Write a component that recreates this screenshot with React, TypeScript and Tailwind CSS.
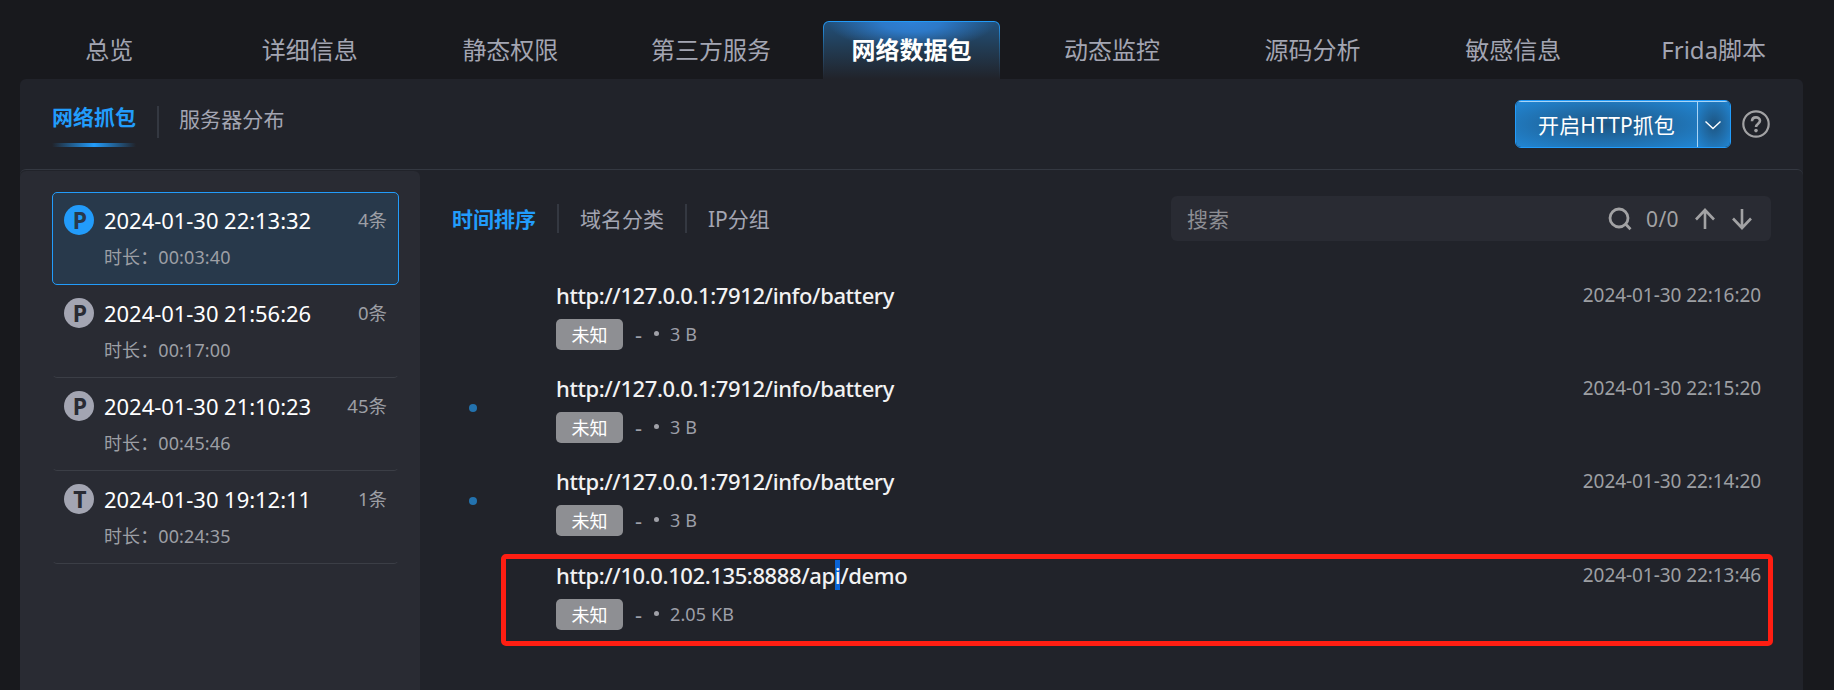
import type { ReactNode } from "react";

const tabs = ["总览", "详细信息", "静态权限", "第三方服务", "网络数据包", "动态监控", "源码分析", "敏感信息", "Frida脚本"];

const sessions = [
  { kind: "P", time: "2024-01-30 22:13:32", count: "4条", duration: "00:03:40", active: true },
  { kind: "P", time: "2024-01-30 21:56:26", count: "0条", duration: "00:17:00", active: false },
  { kind: "P", time: "2024-01-30 21:10:23", count: "45条", duration: "00:45:46", active: false },
  { kind: "T", time: "2024-01-30 19:12:11", count: "1条", duration: "00:24:35", active: false },
];

type Packet = { url: ReactNode; size: string; time: string; dot: boolean };

const packets: Packet[] = [
  { url: "http://127.0.0.1:7912/info/battery", size: "3 B", time: "2024-01-30 22:16:20", dot: false },
  { url: "http://127.0.0.1:7912/info/battery", size: "3 B", time: "2024-01-30 22:15:20", dot: true },
  { url: "http://127.0.0.1:7912/info/battery", size: "3 B", time: "2024-01-30 22:14:20", dot: true },
];

function Tab({ label }: { label: string }) {
  const active = label === "网络数据包";
  return (
    <div className="flex justify-center">
      {active ? (
        <div className="mt-px h-[58px] w-[177px] rounded-t-md bg-linear-to-b from-[#229cfb] via-[#22608f] via-40% to-[#21232a] px-px pt-px">
          <div className="h-[57px] rounded-t-[5px] bg-[radial-gradient(84px_28px_at_50%_0,#2e80d6_0%,#2d79c8_35%,rgba(45,121,200,0)_100%),linear-gradient(180deg,#22507a_0%,#223c54_45%,#21232a_100%)] pt-[11px] text-center text-2xl leading-[34px] font-bold text-white">
            {label}
          </div>
        </div>
      ) : (
        <div className="pt-[13px] text-2xl leading-[34px] text-[#a3a5b2]">{label}</div>
      )}
    </div>
  );
}

function SessionItem({ item }: { item: (typeof sessions)[number] }) {
  return (
    <div
      className={
        item.active
          ? "flex h-[93px] rounded-[5px] border border-[#229cfb] bg-[#28394b] pt-[10px] pr-[11px] pl-[11px]"
          : "flex h-[93px] rounded-[5px] border border-transparent border-b-[#3b3e46] pt-[10px] pr-[11px] pl-[11px]"
      }
    >
      <div
        className={
          item.active
            ? "mt-[2px] flex size-[30px] shrink-0 items-center justify-center rounded-full bg-[#229cfb] pt-px pl-0.5 text-[23px] leading-none font-bold text-[#28394b]"
            : "mt-[2px] flex size-[30px] shrink-0 items-center justify-center rounded-full bg-[#a3a5b2] pt-px pl-0.5 text-[23px] leading-none font-bold text-[#292b33]"
        }
      >
        {item.kind}
      </div>
      <div className="ml-[10px] flex-1">
        <div className="flex items-center justify-between">
          <span className="text-[22px] leading-[34px] tracking-[-0.04px] text-white">{item.time}</span>
          <span className="text-[18.500px] leading-[34px] text-[#9d9fa5]">{item.count}</span>
        </div>
        <div className="mt-[6px] text-[18px] leading-[28px] tracking-[0.1px] text-[#9d9fa5]">时长：{item.duration}</div>
      </div>
    </div>
  );
}

function PacketRow({ item }: { item: Packet }) {
  return (
    <div className="flex h-[93px] items-start">
      <div className="flex w-[104px] shrink-0 pt-[48px] pl-[17px]">
        {item.dot && <span className="size-2 rounded-full bg-[#2372ae]" />}
      </div>
      <div className="flex-1 pt-[16px]">
        <div className="text-[22px] leading-[33px] font-medium tracking-[-0.4px] text-[#f2f2f3]">{item.url}</div>
        <div className="mt-[7px] flex items-center text-[18px] leading-[31px] text-[#9d9fa8]">
          <span className="h-[31px] w-[67px] rounded-[5px] bg-[#8e8f93] text-center leading-[33px] text-white">未知</span>
          <span className="ml-3 w-2 text-[22px]">-</span>
          <span className="mt-[-2px] ml-[11px] size-[5px] rounded-full bg-[#a0a1a8]" />
          <span className="ml-[11px] tracking-[0.1px]">{item.size}</span>
        </div>
      </div>
      <div className="pt-[18px] pr-[10px] text-[19px] leading-[28px] tracking-[-0.07px] text-[#9d9fa3]">{item.time}</div>
    </div>
  );
}

function Divider({ className }: { className: string }) {
  return <span className={`w-0.5 bg-[#343841] ${className}`} />;
}

export default function App() {
  return (
    <div className="h-[690px] w-[1834px] overflow-hidden bg-[#18191d] font-['Noto_Sans','Noto_Sans_CJK_SC',sans-serif] whitespace-nowrap">
      <nav className="ml-[9px] grid h-[79px] w-[1805px] grid-cols-9 pt-5">
        {tabs.map((label) => (
          <Tab key={label} label={label} />
        ))}
      </nav>

      <main className="ml-5 flex h-[611px] w-[1783px] flex-col rounded-t-md bg-[#21232a]">
        <header className="flex h-[90px] shrink-0 items-start pl-8">
          <div className="flex w-[84px] flex-col pt-[22px]">
            <span className="text-[21px] leading-[32px] font-bold text-[#229cfb]">网络抓包</span>
            <span className="mt-[10px] h-1 bg-linear-to-r from-transparent via-[#229cfb] to-transparent" />
          </div>
          <Divider className="mt-[27px] ml-[21px] h-8" />
          <span className="mt-[24px] ml-[20px] text-[21px] leading-[32px] tracking-[0.1px] text-[#a3a5b2]">服务器分布</span>

          <div className="mt-[21px] mr-[33px] ml-auto flex items-center">
            <div className="flex h-12 w-[216px] overflow-hidden rounded-md border border-[#229cfb]">
              <div className="flex w-[182px] items-center justify-center border-t border-r border-[#a9d4f5] bg-[radial-gradient(ellipse_at_center,#1d5582_0%,#206ba6_45%,#2186d4_100%)] pt-0.5 text-[21px] leading-none tracking-[0.1px] text-white">
                开启HTTP抓包
              </div>
              <div className="flex flex-1 items-center justify-center border-t border-[#a9d4f5] bg-[radial-gradient(ellipse_at_center,#1d5582_0%,#206ba6_45%,#2186d4_100%)] pr-0.5">
                <svg width="18" height="12" viewBox="0 0 18 12" fill="none" stroke="#fff" strokeWidth="1.4">
                  <path d="M1.5 2.5 9 9.5l7.500-7" />
                </svg>
              </div>
            </div>
            <svg className="ml-[11px]" width="28" height="28" viewBox="0 0 28 28" fill="none" stroke="#a2a2a4" strokeWidth="2.200">
              <circle cx="14" cy="14" r="12.700" />
              <path d="M10 11.200c0-5 8-5 8-.4 0 2.800-4 3-4 6.200" strokeWidth="2.600" />
              <circle cx="14" cy="20.600" r="1.800" fill="#a2a2a4" stroke="none" />
            </svg>
          </div>
        </header>

        <div className="flex min-h-0 flex-1 rounded-t-md border-t border-[#343841]">
          <aside className="mt-px w-[400px] shrink-0 rounded-t-md bg-[#292b33] pt-[21px] pr-[21px] pl-8">
            {sessions.map((item) => (
              <SessionItem key={item.time} item={item} />
            ))}
          </aside>

          <section className="flex-1 pt-[26px] pr-8 pl-8">
            <div className="flex h-[45px] items-center text-[21px] leading-[32px] text-[#a3a5b2]">
              <span className="font-bold text-[#229cfb]">时间排序</span>
              <Divider className="ml-[21px] h-[29px]" />
              <span className="ml-[21px]">域名分类</span>
              <Divider className="ml-[21px] h-[29px]" />
              <span className="ml-[21px]">IP分组</span>

              <div className="ml-auto flex h-[45px] w-[600px] items-center rounded-md bg-[#292b33] pr-[18px] pl-4">
                <span className="mr-auto text-[#8d8e93]">搜索</span>
                <svg width="24" height="24" viewBox="0 0 24 24" fill="none" stroke="#a2a2a4" strokeWidth="2.800">
                  <circle cx="11" cy="11" r="9" />
                  <path d="m17.500 17 5 5.200" />
                </svg>
                <span className="ml-[14px] w-[34px] tracking-[0.4px] text-[#a2a2a4]">0/0</span>
                <svg className="ml-[14px]" width="22" height="22" viewBox="0 0 22 22" fill="none" stroke="#a2a2a4" strokeWidth="2.600">
                  <path d="M11 21V2.500M2 11.500l9-9.500 9 9.500" />
                </svg>
                <svg className="ml-[15px]" width="22" height="22" viewBox="0 0 22 22" fill="none" stroke="#a2a2a4" strokeWidth="2.600">
                  <path d="M11 1v18.500M2 10.500l9 9.500 9-9.500" />
                </svg>
              </div>
            </div>

            <div className="pt-[22px]">
              {packets.map((item) => (
                <PacketRow key={item.time} item={item} />
              ))}
              <div className="relative pt-px">
                <PacketRow
                  item={{
                    url: (
                      <>
                        http://10.0.102.135:8888/ap<span className="bg-[#0a63d6]">i</span>/demo
                      </>
                    ),
                    size: "2.05 KB",
                    time: "2024-01-30 22:13:46",
                    dot: false,
                  }}
                />
                <div className="absolute top-[12px] left-[49px] h-[92px] w-[1272px] rounded-[5px] border-[5px] border-[#ff1e12]" />
              </div>
            </div>
          </section>
        </div>
      </main>
    </div>
  );
}
